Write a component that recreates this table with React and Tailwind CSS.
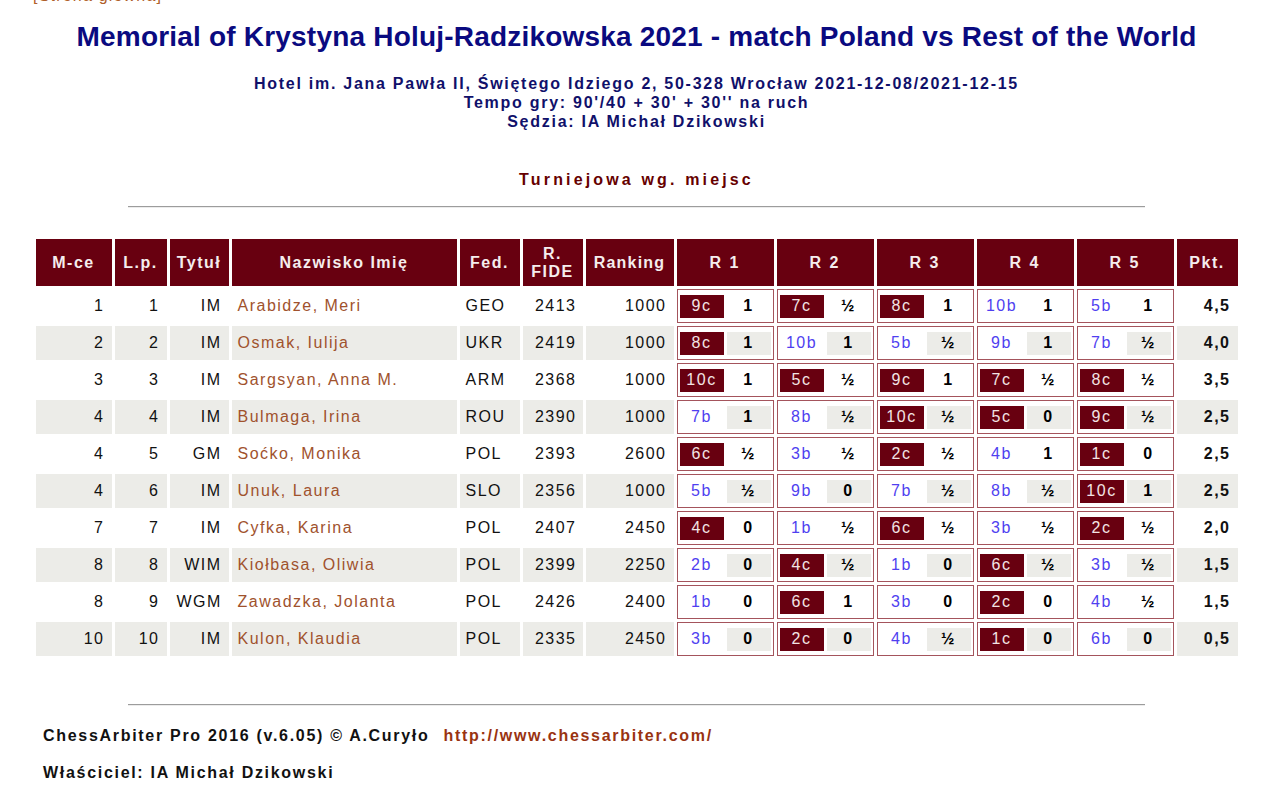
const rows = [
  ['1', '1', 'IM', 'Arabidze, Meri', 'GEO', '2413', '1000', [['9c', '1'], ['7c', '½'], ['8c', '1'], ['10b', '1'], ['5b', '1']], '4,5'],
  ['2', '2', 'IM', 'Osmak, Iulija', 'UKR', '2419', '1000', [['8c', '1'], ['10b', '1'], ['5b', '½'], ['9b', '1'], ['7b', '½']], '4,0'],
  ['3', '3', 'IM', 'Sargsyan, Anna M.', 'ARM', '2368', '1000', [['10c', '1'], ['5c', '½'], ['9c', '1'], ['7c', '½'], ['8c', '½']], '3,5'],
  ['4', '4', 'IM', 'Bulmaga, Irina', 'ROU', '2390', '1000', [['7b', '1'], ['8b', '½'], ['10c', '½'], ['5c', '0'], ['9c', '½']], '2,5'],
  ['4', '5', 'GM', 'Soćko, Monika', 'POL', '2393', '2600', [['6c', '½'], ['3b', '½'], ['2c', '½'], ['4b', '1'], ['1c', '0']], '2,5'],
  ['4', '6', 'IM', 'Unuk, Laura', 'SLO', '2356', '1000', [['5b', '½'], ['9b', '0'], ['7b', '½'], ['8b', '½'], ['10c', '1']], '2,5'],
  ['7', '7', 'IM', 'Cyfka, Karina', 'POL', '2407', '2450', [['4c', '0'], ['1b', '½'], ['6c', '½'], ['3b', '½'], ['2c', '½']], '2,0'],
  ['8', '8', 'WIM', 'Kiołbasa, Oliwia', 'POL', '2399', '2250', [['2b', '0'], ['4c', '½'], ['1b', '0'], ['6c', '½'], ['3b', '½']], '1,5'],
  ['8', '9', 'WGM', 'Zawadzka, Jolanta', 'POL', '2426', '2400', [['1b', '0'], ['6c', '1'], ['3b', '0'], ['2c', '0'], ['4b', '½']], '1,5'],
  ['10', '10', 'IM', 'Kulon, Klaudia', 'POL', '2335', '2450', [['3b', '0'], ['2c', '0'], ['4b', '½'], ['1c', '0'], ['6b', '0']], '0,5'],
];

function RoundCell({ opp, res, grey }) {
  const black = opp.endsWith('c');
  return (
    <td className="h-[34px] p-0 border border-[#a4545c] bg-white">
      <div className="flex items-center gap-[3px] px-[2px]">
        <div
          className={
            black
              ? 'w-[44px] h-[23px] flex items-center justify-center bg-[#680010] text-[#f3e4e4]'
              : 'w-[44px] h-[23px] flex items-center justify-center text-[#4f3ff0]'
          }
        >
          {opp}
        </div>
        <div
          className={
            grey
              ? 'w-[44px] h-[23px] flex items-center justify-center font-bold text-black bg-[#ececE8]'
              : 'w-[44px] h-[23px] flex items-center justify-center font-bold text-black'
          }
        >
          {res}
        </div>
      </div>
    </td>
  );
}

function Hr() {
  return <div className="mx-auto w-[1017px] h-[2px] border-t border-t-[#9c9c9c] border-b border-b-[#ececec]"></div>;
}

export default function App() {
  return (
    <div className="w-[1273px] -mt-[13px] bg-white text-[#111] font-['Liberation_Sans',Arial,sans-serif]">
      <div className="pl-[33px] text-[16px] leading-[18px] tracking-[1.2px] text-[#b0602a]">[Strona główna]</div>

      <h1 className="mt-[16px] text-center text-[28px] leading-[32px] font-bold tracking-[0.2px] text-[#0a0a80]">
        Memorial of Krystyna Holuj-Radzikowska 2021 - match Poland vs Rest of the World
      </h1>

      <div className="mt-[21px] text-center text-[16px] leading-[19px] font-bold tracking-[1.73px] text-[#10106a]">
        <div>Hotel im. Jana Pawła II, Świętego Idziego 2, 50-328 Wrocław 2021-12-08/2021-12-15</div>
        <div>Tempo gry: 90'/40 + 30' + 30'' na ruch</div>
        <div>Sędzia: IA Michał Dzikowski</div>
      </div>

      <div className="mt-[39px] text-center text-[16px] leading-[19px] font-bold tracking-[3.15px] text-[#660000]">
        Turniejowa wg. miejsc
      </div>

      <div className="mt-[17px]">
        <Hr />
      </div>

      <table className="mt-[28px] mx-auto w-[1208px] table-fixed border-separate border-spacing-[3px] text-[16px] tracking-[1.5px]">
        <thead>
          <tr className="h-[47px] bg-[#680010] text-[#f5eded] font-bold">
            <th className="w-[76px] bg-[#680010]">M-ce</th>
            <th className="w-[52px] bg-[#680010]">L.p.</th>
            <th className="w-[59px] bg-[#680010]">Tytuł</th>
            <th className="w-[225px] bg-[#680010]">Nazwisko Imię</th>
            <th className="w-[60px] bg-[#680010]">Fed.</th>
            <th className="w-[60px] bg-[#680010] leading-[18px]">R.<br />FIDE</th>
            <th className="w-[88px] bg-[#680010] tracking-[1.2px]">Ranking</th>
            <th className="w-[97px] bg-[#680010] tracking-[2px]">R 1</th>
            <th className="w-[97px] bg-[#680010] tracking-[2px]">R 2</th>
            <th className="w-[97px] bg-[#680010] tracking-[2px]">R 3</th>
            <th className="w-[97px] bg-[#680010] tracking-[2px]">R 4</th>
            <th className="w-[97px] bg-[#680010] tracking-[2px]">R 5</th>
            <th className="w-[61px] bg-[#680010]">Pkt.</th>
          </tr>
        </thead>
        <tbody>
          {rows.map((r, i) => {
            const grey = i % 2 === 1;
            const bg = grey ? 'bg-[#ececE8]' : 'bg-white';
            return (
              <tr key={i}>
                <td className={`h-[34px] px-[7px] text-right ${bg}`}>{r[0]}</td>
                <td className={`px-[7px] text-right ${bg}`}>{r[1]}</td>
                <td className={`px-[7px] text-right ${bg}`}>{r[2]}</td>
                <td className={`px-[6px] text-left text-[#a0522d] whitespace-nowrap ${bg}`}>{r[3]}</td>
                <td className={`px-[6px] text-left ${bg}`}>{r[4]}</td>
                <td className={`px-[6px] text-right ${bg}`}>{r[5]}</td>
                <td className={`px-[7px] text-right ${bg}`}>{r[6]}</td>
                {r[7].map(([opp, res], j) => (
                  <RoundCell key={j} opp={opp} res={res} grey={grey} />
                ))}
                <td className={`px-[7px] text-right font-bold ${bg}`}>{r[8]}</td>
              </tr>
            );
          })}
        </tbody>
      </table>

      <div className="mt-[45px]">
        <Hr />
      </div>

      <div className="mt-[20px] pl-[43px] text-[16px] leading-[19px] font-bold tracking-[1.7px] text-[#111]">
        <div>
          ChessArbiter Pro 2016 (v.6.05) © A.Curyło
          <span className="ml-[14px] text-[#993311]">http://www.chessarbiter.com/</span>
        </div>
        <div className="mt-[18px]">Właściciel: IA Michał Dzikowski</div>
      </div>
    </div>
  );
}
